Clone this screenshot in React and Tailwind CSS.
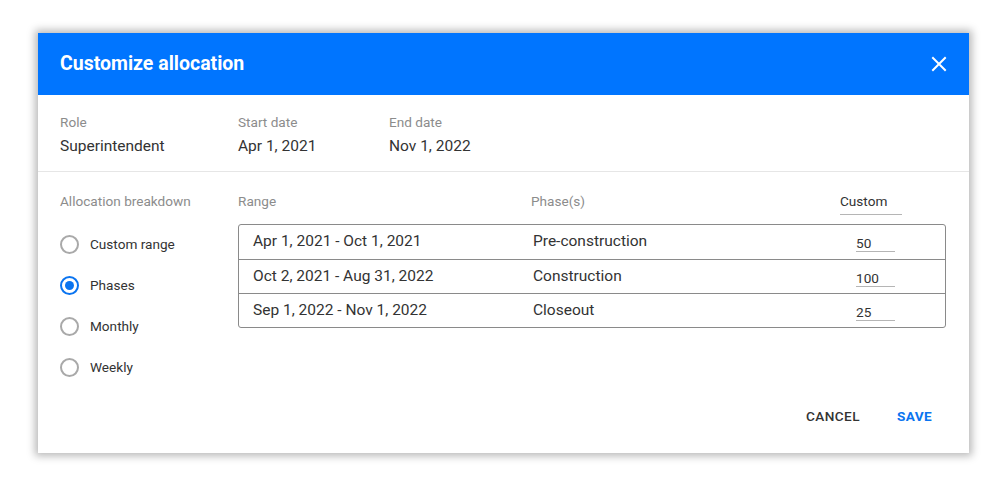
import { useState } from 'react'

const rows = [
    { range: 'Apr 1, 2021 - Oct 1, 2021', phase: 'Pre-construction', value: '50' },
    { range: 'Oct 2, 2021 - Aug 31, 2022', phase: 'Construction', value: '100' },
    { range: 'Sep 1, 2022 - Nov 1, 2022', phase: 'Closeout', value: '25' },
]

const options = ['Custom range', 'Phases', 'Monthly', 'Weekly']

export default function App() {
    const [selected, setSelected] = useState('Phases')

    return (
        <div className="w-[1000px] h-[486px] bg-white pt-[33px] pl-[38px] font-['Roboto',sans-serif]">
            <div className="w-[931px] h-[420px] bg-white flex flex-col shadow-[0_0_8px_3px_rgba(0,0,0,0.28)]">
                {/* header */}
                <div className="h-[62px] bg-[#0075ff] flex items-center justify-between pl-[22px] pr-[22px] shrink-0">
                    <h1 className="text-white text-[19.5px] font-bold">Customize allocation</h1>
                    <button className="text-white">
                        <svg width="16" height="16" viewBox="0 0 16 16" fill="none" stroke="currentColor" strokeWidth="2" strokeLinecap="square">
                            <path d="M2 2L14 14M14 2L2 14" />
                        </svg>
                    </button>
                </div>

                {/* role + dates */}
                <div className="h-[77px] border-b border-[#e6e6e6] flex pl-[22px] pt-[17px] shrink-0">
                    <div className="w-[178px]">
                        <div className="text-[13.6px] text-[#8c8c8c] leading-[20px]">Role</div>
                        <div className="text-[15.5px] text-[#333] leading-[22px] mt-[3px]">Superintendent</div>
                    </div>
                    <div className="w-[151px]">
                        <div className="text-[13.6px] text-[#8c8c8c] leading-[20px]">Start date</div>
                        <div className="text-[15.5px] text-[#333] leading-[22px] mt-[3px]">Apr 1, 2021</div>
                    </div>
                    <div>
                        <div className="text-[13.6px] text-[#8c8c8c] leading-[20px]">End date</div>
                        <div className="text-[15.5px] text-[#333] leading-[22px] mt-[3px]">Nov 1, 2022</div>
                    </div>
                </div>

                {/* breakdown */}
                <div className="flex pl-[22px] pr-[23px] pt-[19px] shrink-0">
                    <div className="w-[178px]">
                        <div className="text-[13.6px] text-[#8c8c8c] leading-[20px]">Allocation breakdown</div>
                        <div className="mt-[13px] flex flex-col">
                            {options.map((opt) => (
                                <label key={opt} className="h-[41px] flex items-center gap-[11px] cursor-pointer" onClick={() => setSelected(opt)}>
                                    {selected === opt ? (
                                        <span className="w-[19px] h-[19px] rounded-full border-2 border-[#0a74f0] flex items-center justify-center">
                                            <span className="w-[9px] h-[9px] rounded-full bg-[#0a74f0]" />
                                        </span>
                                    ) : (
                                        <span className="w-[19px] h-[19px] rounded-full border-2 border-[#a9a9a9]" />
                                    )}
                                    <span className="text-[13.6px] text-[#333]">{opt}</span>
                                </label>
                            ))}
                        </div>
                    </div>

                    <div className="flex-1">
                        <div className="flex items-start h-[33px]">
                            <div className="w-[293px] text-[13.6px] text-[#8c8c8c] leading-[20px]">Range</div>
                            <div className="w-[309px] text-[13.6px] text-[#8c8c8c] leading-[20px]">Phase(s)</div>
                            <div className="w-[62px] text-[13.6px] text-[#333] leading-[20px] pb-[3px] border-b border-[#b5b5b5]">Custom</div>
                        </div>
                        <div className="border border-[#8a8a8a] rounded-[3px]">
                            {rows.map((row, i) => (
                                <div key={row.range} className={'h-[34px] flex items-center pl-[14px] ' + (i > 0 ? 'border-t border-[#8a8a8a]' : '')}>
                                    <div className="w-[280px] text-[15.5px] text-[#333]">{row.range}</div>
                                    <div className="w-[323px] text-[15.5px] text-[#333]">{row.phase}</div>
                                    <div className="w-[39px] text-[13.6px] text-[#333] leading-[16px] border-b border-[#b5b5b5] mt-[3px]">{row.value}</div>
                                </div>
                            ))}
                        </div>
                    </div>
                </div>

                {/* footer */}
                <div className="flex-1 flex items-end justify-end pr-[37px] pb-[27px] gap-[37px]">
                    <button className="text-[13.6px] leading-[20px] font-medium text-[#333] tracking-[0.4px]">CANCEL</button>
                    <button className="text-[13.6px] leading-[20px] font-bold text-[#0a74f0] tracking-[0.4px]">SAVE</button>
                </div>
            </div>
        </div>
    )
}
